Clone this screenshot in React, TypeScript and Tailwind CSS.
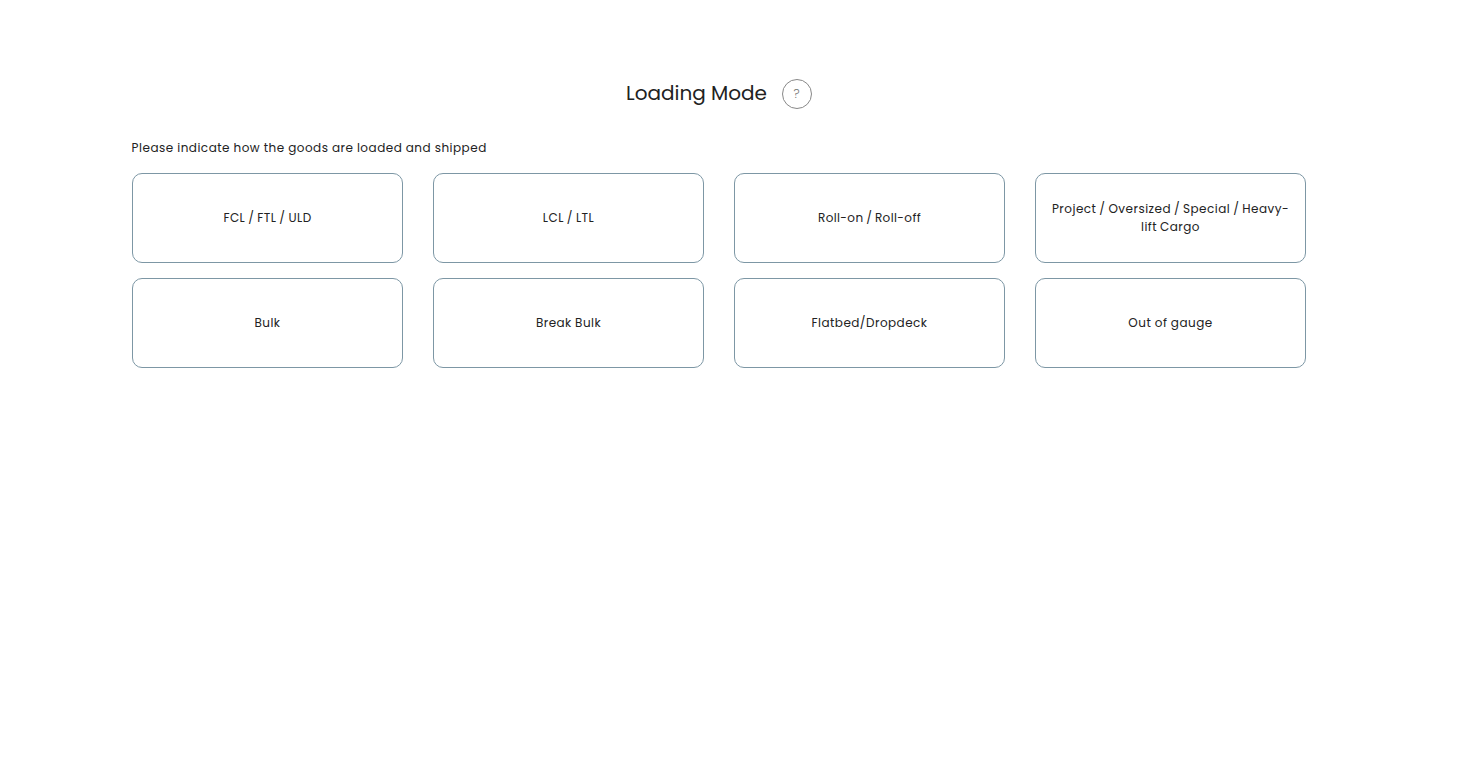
const modes = [
  { lines: ["FCL / FTL / ULD"], spacing: "tracking-[0.45px] [word-spacing:-0.7px]" },
  { lines: ["LCL / LTL"], spacing: "tracking-[0.45px] [word-spacing:-0.7px]" },
  { lines: ["Roll-on / Roll-off"], spacing: "tracking-[0.38px] [word-spacing:-0.9px]" },
  { lines: ["Project / Oversized / Special / Heavy-", "lift Cargo"], spacing: "tracking-[0.48px] [word-spacing:-0.8px]" },
  { lines: ["Bulk"], spacing: "tracking-[0.45px]" },
  { lines: ["Break Bulk"], spacing: "tracking-[0.45px] [word-spacing:-0.3px]" },
  { lines: ["Flatbed/Dropdeck"], spacing: "tracking-[0.45px]" },
  { lines: ["Out of gauge"], spacing: "tracking-[0.48px] [word-spacing:-0.2px]" },
];

export default function App() {
  return (
    <main className="min-h-[771px] bg-white pt-[79px] pl-[132px] font-[Poppins,Inter,sans-serif] text-[#222]">
      <div className="w-[1174px]">
        <header className="flex h-[30px] items-center justify-center gap-[15px]">
          <h1 className="pb-0.5 text-[20px] font-normal leading-[28px]"><span>Loading Mode</span></h1>
          <button className="flex size-[30px] items-center justify-center rounded-full border border-[#888] pr-px text-[12px] font-light text-[#777]">?</button>
        </header>
        <p className="-ml-[0.4px] mt-[30px] h-[18px] text-[12px] leading-[18px]"><span className="tracking-[0.49px] [word-spacing:-0.2px]">Please indicate how the goods are loaded and shipped</span></p>
        <div className="mt-4 grid grid-cols-4 gap-x-[30px] gap-y-[15px]">
          {modes.map((mode) => (
            <button key={mode.lines[0]} className="flex h-[90px] flex-col items-center justify-center rounded-[10px] border border-[#7d97a5] text-[12px] leading-[18px]">
              {mode.lines.map((line) => <span key={line} className={mode.spacing}>{line}</span>)}
            </button>
          ))}
        </div>
      </div>
    </main>
  );
}
